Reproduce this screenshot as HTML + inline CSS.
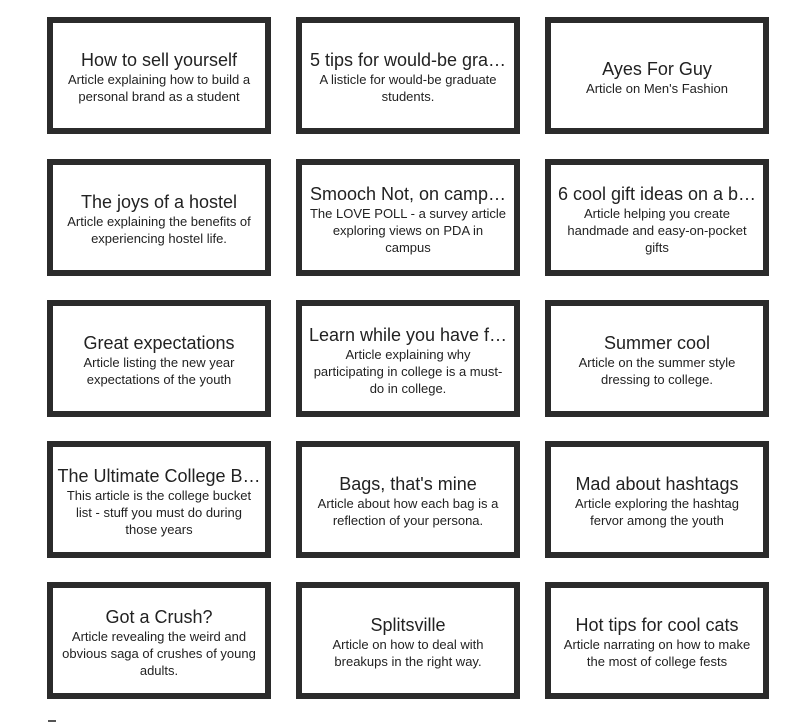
<!DOCTYPE html>
<html><head><style>
body{margin:0;background:#fff;width:811px;height:724px;overflow:hidden;position:relative;font-family:"Liberation Sans",sans-serif;color:#222}
.b{position:absolute;width:212px;height:102px;padding-top:3px;border:6px solid #2b2b2b;display:flex;flex-direction:column;justify-content:center;align-items:center;text-align:center;box-sizing:content-box}
.t{font-size:18px;line-height:22px;white-space:nowrap}
.d{font-size:13px;line-height:17px;white-space:nowrap}
</style></head><body>
<div class="b" style="left:47px;top:17px"><div class="t">How to sell yourself</div><div class="d">Article explaining how to build a<br>personal brand as a student</div></div>
<div class="b" style="left:296px;top:17px"><div class="t">5 tips for would-be gra…</div><div class="d">A listicle for would-be graduate<br>students.</div></div>
<div class="b" style="left:545px;top:17px"><div class="t">Ayes For Guy</div><div class="d">Article on Men's Fashion</div></div>

<div class="b" style="left:47px;top:159px"><div class="t">The joys of a hostel</div><div class="d">Article explaining the benefits of<br>experiencing hostel life.</div></div>
<div class="b" style="left:296px;top:159px"><div class="t">Smooch Not, on camp…</div><div class="d">The LOVE POLL - a survey article<br>exploring views on PDA in<br>campus</div></div>
<div class="b" style="left:545px;top:159px"><div class="t">6 cool gift ideas on a b…</div><div class="d">Article helping you create<br>handmade and easy-on-pocket<br>gifts</div></div>

<div class="b" style="left:47px;top:300px"><div class="t">Great expectations</div><div class="d">Article listing the new year<br>expectations of the youth</div></div>
<div class="b" style="left:296px;top:300px"><div class="t">Learn while you have f…</div><div class="d">Article explaining why<br>participating in college is a must-<br>do in college.</div></div>
<div class="b" style="left:545px;top:300px"><div class="t">Summer cool</div><div class="d">Article on the summer style<br>dressing to college.</div></div>

<div class="b" style="left:47px;top:441px"><div class="t">The Ultimate College B…</div><div class="d">This article is the college bucket<br>list - stuff you must do during<br>those years</div></div>
<div class="b" style="left:296px;top:441px"><div class="t">Bags, that's mine</div><div class="d">Article about how each bag is a<br>reflection of your persona.</div></div>
<div class="b" style="left:545px;top:441px"><div class="t">Mad about hashtags</div><div class="d">Article exploring the hashtag<br>fervor among the youth</div></div>

<div class="b" style="left:47px;top:582px"><div class="t">Got a Crush?</div><div class="d">Article revealing the weird and<br>obvious saga of crushes of young<br>adults.</div></div>
<div class="b" style="left:296px;top:582px"><div class="t">Splitsville</div><div class="d">Article on how to deal with<br>breakups in the right way.</div></div>
<div class="b" style="left:545px;top:582px"><div class="t">Hot tips for cool cats</div><div class="d">Article narrating on how to make<br>the most of college fests</div></div>
<div style="position:absolute;left:48px;top:720px;width:8px;height:2px;background:#555"></div>
</body></html>
